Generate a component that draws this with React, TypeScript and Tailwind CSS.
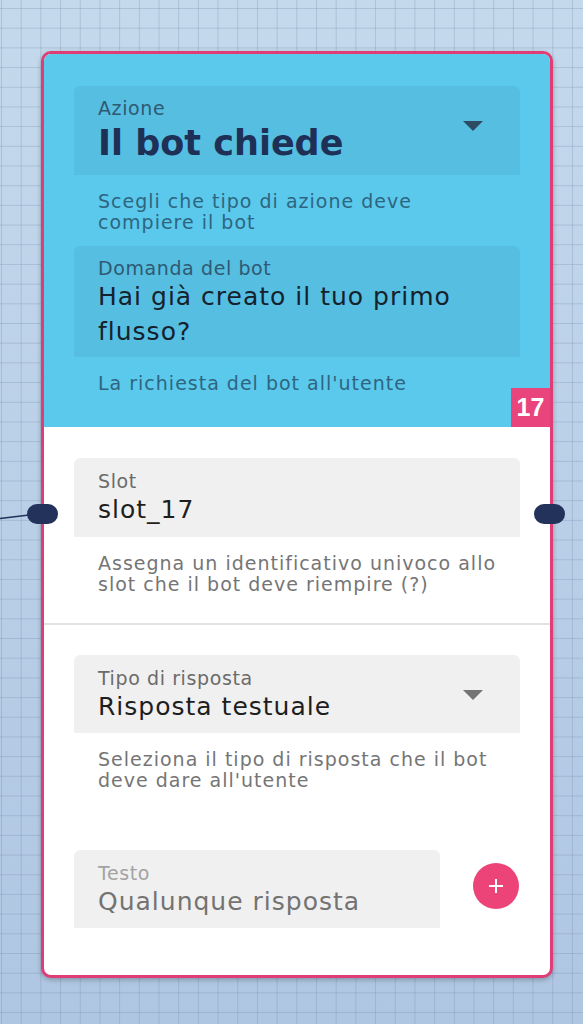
import React from "react";

function Arrow({ color, top }: { color: string; top: string }) {
  return (
    <svg width="20" height="10" viewBox="0 0 20 10" className={`shrink-0 ${top}`}>
      <path d="M0 0 L20 0 L10 10 Z" fill={color} />
    </svg>
  );
}

export default function App() {
  return (
    <div className="relative w-[583px] h-[1024px] overflow-hidden font-['DejaVu_Sans',sans-serif] bg-[linear-gradient(to_right,rgba(110,130,165,0.28)_1px,transparent_1px),linear-gradient(to_bottom,rgba(110,130,165,0.28)_1px,transparent_1px),linear-gradient(to_bottom,#c4d9ec,#afc6e2)] bg-[size:19.7px_19.7px,19.7px_19.7px,100%_100%] bg-[position:1px_8px,1px_8px,0_0] pt-[51px] pl-[41px]">
      {/* connection line */}
      <svg className="absolute left-0 top-[508px]" width="30" height="14" viewBox="0 0 30 14">
        <path d="M0 10.5 L29 7" stroke="#22325a" strokeWidth="1.6" fill="none" />
      </svg>

      <div className="relative w-[512px] rounded-[10px] border-[3px] border-[#e03d76] bg-white shadow-[0_2px_5px_rgba(0,0,0,0.25)]">
        {/* connectors */}
        <div className="absolute left-[-17px] top-[450px] w-[31px] h-[20px] rounded-full bg-[#22325a]" />
        <div className="absolute right-[-15px] top-[450px] w-[31px] h-[20px] rounded-full bg-[#22325a]" />

        {/* blue section */}
        <div className="relative rounded-t-[7px] bg-[#5bc9ec] pt-[32px] pb-[33px] px-[30px]">
          <div className="flex justify-between h-[89px] rounded-t-[6px] bg-[#56bee1] pl-[24px] pr-[37px] pt-[12px]">
            <div>
              <div className="text-[19px] leading-[21px] tracking-[0.6px] text-[#2e5a72]">Azione</div>
              <div className="text-[35px] leading-[48px] font-bold text-[#1f3057]">Il bot chiede</div>
            </div>
            <Arrow color="#2d4c63" top="mt-[23px]" />
          </div>
          <div className="mt-[16px] ml-[24px] w-[410px] text-[19px] leading-[21px] tracking-[1px] text-[#2e6580]">
            Scegli che tipo di azione deve compiere il bot
          </div>

          <div className="mt-[13px] h-[111px] rounded-t-[6px] bg-[#56bee1] pl-[24px] pr-[24px] pt-[12px]">
            <div className="text-[19px] leading-[21px] tracking-[0.6px] text-[#2e5a72]">Domanda del bot</div>
            <div className="text-[25px] leading-[35px] tracking-[1px] text-[#15222c]">
              Hai già creato il tuo primo flusso?
            </div>
          </div>
          <div className="mt-[16px] ml-[24px] w-[410px] text-[19px] leading-[21px] tracking-[1px] text-[#2e6580]">
            La richiesta del bot all'utente
          </div>

          <div className="absolute right-0 bottom-0 w-[39px] h-[39px] bg-[#e9447b] flex items-center justify-center font-['Liberation_Sans',sans-serif] font-bold text-[25px] leading-none text-white">
            17
          </div>
        </div>

        {/* slot section */}
        <div className="pt-[31px] pb-[28px] px-[30px] border-b-[2px] border-[#e2e2e2]">
          <div className="h-[79px] rounded-t-[6px] bg-[#f0f0f0] pl-[24px] pt-[13px]">
            <div className="text-[19px] leading-[21px] tracking-[0.6px] text-[#6b6b6b]">Slot</div>
            <div className="text-[25px] leading-[35px] tracking-[1px] text-[#1e1e1e]">slot_17</div>
          </div>
          <div className="mt-[16px] ml-[24px] w-[410px] text-[19px] leading-[21px] tracking-[1px] text-[#757575]">
            Assegna un identificativo univoco allo slot che il bot deve riempire (?)
          </div>
        </div>

        {/* response section */}
        <div className="pt-[30px] pb-[47px] px-[30px]">
          <div className="flex justify-between h-[78px] rounded-t-[6px] bg-[#f0f0f0] pl-[24px] pr-[37px] pt-[13px]">
            <div>
              <div className="text-[19px] leading-[21px] tracking-[0.6px] text-[#6b6b6b]">Tipo di risposta</div>
              <div className="text-[25px] leading-[35px] tracking-[1px] text-[#1e1e1e]">Risposta testuale</div>
            </div>
            <Arrow color="#757575" top="mt-[22px]" />
          </div>
          <div className="mt-[16px] ml-[24px] w-[410px] text-[19px] leading-[21px] tracking-[1px] text-[#757575]">
            Seleziona il tipo di risposta che il bot deve dare all'utente
          </div>

          <div className="mt-[59px] flex items-start gap-[33px]">
            <div className="w-[366px] h-[78px] rounded-t-[6px] bg-[#f0f0f0] pl-[24px] pt-[13px]">
              <div className="text-[19px] leading-[21px] tracking-[0.6px] text-[#a3a3a3]">Testo</div>
              <div className="text-[25px] leading-[35px] tracking-[1px] text-[#737373]">Qualunque risposta</div>
            </div>
            <button className="mt-[13px] w-[46px] h-[46px] rounded-full bg-[#ec4479] flex items-center justify-center">
              <svg width="16" height="16" viewBox="0 0 16 16">
                <path d="M8 1 V15 M1 8 H15" stroke="white" strokeWidth="2" />
              </svg>
            </button>
          </div>
        </div>
      </div>
    </div>
  );
}
